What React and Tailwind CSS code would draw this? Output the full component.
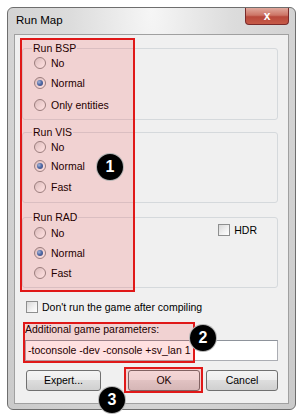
import React from 'react';

const font = { fontFamily: '"Liberation Sans", Arial, sans-serif' };

const Radio = ({ label, checked, className = '' }) => (
  <div className={`flex items-center h-[18px] ${className}`}>
    <span className="w-[12px] h-[12px] rounded-full border border-[#8e8f8f] bg-[linear-gradient(135deg,#d4d4d4_0%,#f0f0f0_55%,#ffffff_100%)] flex items-center justify-center">
      {checked && (
        <span className="w-[6px] h-[6px] rounded-full bg-[radial-gradient(circle_at_35%_35%,#9fd0f5_0%,#3a7cc0_45%,#1a4a80_100%)]" />
      )}
    </span>
    <span className="ml-[5px] text-[10.5px] leading-[12px] text-black">{label}</span>
  </div>
);

const Check = ({ label, className = '' }) => (
  <div className={`flex items-center ${className}`}>
    <span className="w-[12px] h-[12px] border border-[#8e8f8f] bg-[linear-gradient(135deg,#d8d8d8_0%,#f2f2f2_60%,#ffffff_100%)]" />
    <span className="ml-[4px] text-[10.5px] leading-[12px] text-black">{label}</span>
  </div>
);

const Group = ({ title, className = '', children }) => (
  <fieldset className={`border border-[#d5d9dc] rounded-[3px] m-0 p-0 ${className}`}>
    <legend className="ml-[9px] px-[1px] text-[10.5px] leading-[12px] text-black">{title}</legend>
    <div className="pl-[11px]">{children}</div>
  </fieldset>
);

const Button = ({ label, className = '' }) => (
  <div
    className={`h-[21px] flex items-center justify-center border border-[#707070] rounded-[3px] bg-[linear-gradient(#f4f4f4_0%,#ececec_50%,#dddddd_50%,#d0d0d0_100%)] text-[10.5px] text-black ${className}`}
  >
    {label}
  </div>
);

const Badge = ({ n, className }) => (
  <div
    className={`absolute w-[28px] h-[28px] rounded-full bg-black border border-white/70 flex items-center justify-center text-white font-bold text-[16px] ${className}`}
  >
    {n}
  </div>
);

export default function App() {
  return (
    <div className="relative w-[301px] h-[415px] bg-white overflow-hidden pt-[7px] pl-[7px]" style={font}>
      <div className="w-[289px] h-[403px] border border-[#6e6e6e] rounded-[6px] bg-[radial-gradient(ellipse_at_50%_0%,#f6f6f6_0%,#dcdcdc_40%,#cacaca_100%)] flex flex-col px-[6px] pb-[5px]">
        {/* title bar */}
        <div className="h-[26px] flex items-start -mx-[6px]">
          <span className="pl-[8px] self-center text-[11.5px] text-black">Run Map</span>
          <div className="ml-auto mr-[6px] w-[44px] h-[17px] rounded-b-[4px] border border-t-0 border-[#7a2a2a] bg-[linear-gradient(#e0a89c_0%,#cd7566_45%,#b8483b_55%,#c65a48_100%)] flex items-center justify-center">
            <span className="text-white font-bold text-[12px] leading-none">x</span>
          </div>
        </div>

        {/* client */}
        <div className="flex-1 border border-[#a0a0a0] bg-[#f0f0f0] pt-[7px] pl-[7px] pr-[10px] flex flex-col">
          <Group title="Run BSP">
            <Radio label="No" />
            <Radio label="Normal" checked className="mt-[2px]" />
            <Radio label="Only entities" className="mt-[4px]" />
            <div className="h-[5px]" />
          </Group>

          <Group title="Run VIS" className="mt-[6px]">
            <Radio label="No" />
            <Radio label="Normal" checked className="mt-[1px]" />
            <Radio label="Fast" className="mt-[3px]" />
            <div className="h-[6px]" />
          </Group>

          <Group title="Run RAD" className="mt-[8px]">
            <div className="flex">
              <div className="flex flex-col flex-1">
                <Radio label="No" className="mt-[1px]" />
                <Radio label="Normal" checked className="mt-[2px]" />
                <Radio label="Fast" className="mt-[2px]" />
                <div className="h-[5px]" />
              </div>
              <Check label="HDR" className="self-start h-[13px] mr-[20px]" />
            </div>
          </Group>

          <div className="pl-[3px] flex flex-col">
            <Check label="Don't run the game after compiling" className="mt-[12px] h-[14px] ml-[1px]" />
            <div className="mt-[9px] h-[12px] text-[10.5px] leading-[12px] text-black">Additional game parameters:</div>
            <div className="mt-[5px] h-[21px] border border-[#abadb3] border-t-[#8e939b] bg-white flex items-center pl-[2px] text-[10.5px] text-black">
              -toconsole -dev -console +sv_lan 1
            </div>
            <div className="mt-[9px] flex items-center">
              <Button label="Expert..." className="w-[75px] ml-[1px]" />
              <Button label="OK" className="w-[72px] ml-auto" />
              <Button label="Cancel" className="w-[72px] ml-[6px]" />
            </div>
          </div>
        </div>
      </div>

      {/* annotations */}
      <div className="absolute left-[20px] top-[38px] w-[115px] h-[254px] border-2 border-[#e01818] bg-[rgba(255,0,0,0.12)]" />
      <div className="absolute left-[23px] top-[322px] w-[172px] h-[41px] border-2 border-[#e01818] bg-[rgba(255,0,0,0.12)]" />
      <div className="absolute left-[124px] top-[367px] w-[79px] h-[26px] border-2 border-[#e01818] bg-[rgba(255,0,0,0.12)]" />
      <Badge n="1" className="left-[96px] top-[153px]" />
      <Badge n="2" className="left-[189px] top-[324px]" />
      <Badge n="3" className="left-[98px] top-[386px]" />
    </div>
  );
}
